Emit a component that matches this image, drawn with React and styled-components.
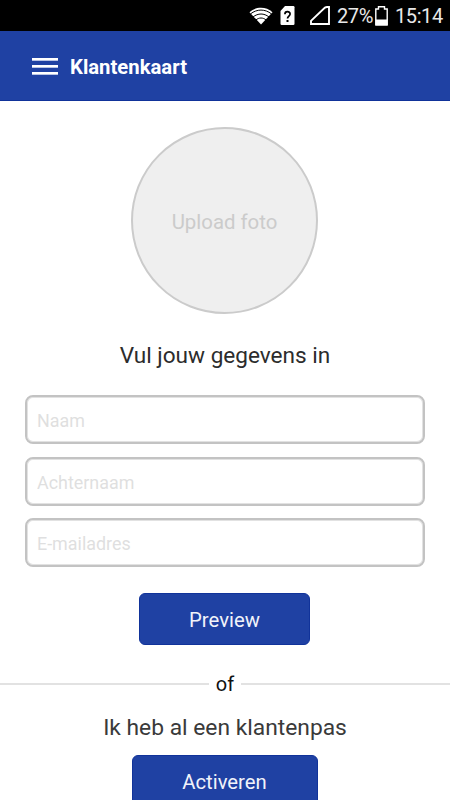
import React, { useState } from "react";
import styled, { createGlobalStyle } from "styled-components";

const FIELDS = [
  { id: "firstName", label: "Naam" },
  { id: "lastName", label: "Achternaam" },
  { id: "email", label: "E-mailadres" },
];

function StatusBar() {
  return (
    <Status>
      <StatusIcon width="24" height="18" viewBox="0 0 24 18" $gap={7}>
        <path d="M0.5 5.2C7 -0.7 17 -0.7 23.5 5.2L12 17.5Z" fill="#fff" />
        <g fill="none" stroke="#000" strokeWidth="1">
          <path d="M1.5 6.9C8 1.8 16 1.8 22.5 6.9" />
          <path d="M4 10C9 6 15 6 20 10" />
          <path d="M6.8 13.1C10 10.3 14 10.3 17.2 13.1" />
        </g>
      </StatusIcon>
      <StatusIcon width="15" height="19" viewBox="0 0 15 19" $gap={15}>
        <path d="M5 0H13.3Q14.5 0 14.5 1.2V17.8Q14.5 19 13.3 19H1.7Q0.5 19 0.5 17.8V5Z" fill="#fff" />
        <path d="M4.9 8.2C4.9 4.9 10.1 4.9 10.1 8C10.1 10 7.5 10.2 7.5 12.6" fill="none" stroke="#000" strokeWidth="1.7" />
        <rect x="6.5" y="14" width="2" height="2" fill="#000" />
      </StatusIcon>
      <StatusIcon width="20" height="19" viewBox="0 0 20 19" $gap={7}>
        <path d="M1 18V14.8L15 1.6Q16 1 17 1H19V18Z" fill="none" stroke="#fff" strokeWidth="1.9" />
      </StatusIcon>
      <StatusText $width={36}>27%</StatusText>
      <StatusIcon width="13" height="20" viewBox="0 0 13 20" $gap={7}>
        <path d="M0.8 18.8V3H3.5V0.8H9.5V3H12.2V18.8Z" fill="none" stroke="#fff" strokeWidth="1.4" />
        <rect x="0.5" y="13.5" width="12" height="6" fill="#fff" />
      </StatusIcon>
      <StatusText $width={48}>15:14</StatusText>
    </Status>
  );
}

function App() {
  const [values, setValues] = useState({ firstName: "", lastName: "", email: "" });

  function onChange(e) {
    setValues({ ...values, [e.target.name]: e.target.value });
  }

  return (
    <Screen>
      <GlobalStyle />
      <StatusBar />
      <Header>
        <MenuButton aria-label="Menu">
          <MenuLine />
          <MenuLine />
          <MenuLine />
        </MenuButton>
        <Title>Klantenkaart</Title>
      </Header>
      <Content>
        <UploadButton>Upload foto</UploadButton>
        <Heading>Vul jouw gegevens in</Heading>
        <Form>
          {FIELDS.map(field => (
            <Input
              key={field.id}
              name={field.id}
              placeholder={field.label}
              value={values[field.id]}
              onChange={onChange}
            />
          ))}
        </Form>
        <Button $width={171}>Preview</Button>
        <Divider>of</Divider>
        <SubHeading>Ik heb al een klantenpas</SubHeading>
        <Button $width={186}>Activeren</Button>
      </Content>
    </Screen>
  );
}

const GlobalStyle = createGlobalStyle`
  * {
    box-sizing: border-box;
  }

  body {
    margin: 0;
    background-color: #fff;
    font-family: Roboto, sans-serif;
  }

  button,
  input {
    font-family: inherit;
  }
`;

const Screen = styled.div`
  display: flex;
  flex-direction: column;
  height: 800px;
  overflow: hidden;
`;

const Status = styled.div`
  display: flex;
  flex: none;
  align-items: center;
  justify-content: flex-end;
  height: 31px;
  padding-right: 7px;
  background-color: #000;
`;

const StatusIcon = styled.svg`
  flex: none;
  margin-right: ${props => props.$gap}px;
`;

const StatusText = styled.span`
  width: ${props => props.$width}px;
  margin-right: ${props => (props.$width === 36 ? 2 : 0)}px;
  padding-top: 1px;
  font-size: 20px;
  line-height: 24px;
  letter-spacing: -0.4px;
  white-space: nowrap;
  color: #e8e8e8;
`;

const Header = styled.header`
  display: flex;
  flex: none;
  align-items: center;
  height: 70px;
  padding: 2px 32px 0;
  border-bottom: 1px solid #11339a;
  background-color: #1f41a3;
`;

const MenuButton = styled.button`
  display: flex;
  flex-direction: column;
  gap: 4px;
  width: 26px;
  margin-right: 12px;
  padding: 0;
  border: 0;
  background: none;
`;

const MenuLine = styled.span`
  height: 3px;
  border-bottom: 1px solid #b9c4e4;
  background-color: #fff;
`;

const Title = styled.h1`
  margin: 0;
  font-weight: 700;
  font-size: 20.3px;
  line-height: 24px;
  color: #fff;
`;

const Content = styled.main`
  display: flex;
  flex: 1;
  flex-direction: column;
  align-items: center;
  padding-top: 26px;
`;

const UploadButton = styled.button`
  flex: none;
  width: 187px;
  height: 187px;
  margin-right: 1px;
  padding: 2px 0 0;
  border: 2px solid #cbcbcb;
  border-radius: 50%;
  background-color: #efefef;
  font-size: 20.4px;
  color: #cbcbcb;
`;

const Heading = styled.h2`
  margin: 28px 0 0;
  font-weight: 400;
  font-size: 22.6px;
  line-height: 28px;
  color: #2c2c2c;
`;

const Form = styled.form`
  display: flex;
  flex-direction: column;
  gap: 12.7px;
  width: 400px;
  margin-top: 25px;
`;

const Input = styled.input`
  width: 100%;
  height: 49px;
  padding: 2px 10px 0;
  border: 2px solid #c3c3c3;
  border-radius: 8px;
  background-color: #fff;
  box-shadow: inset 0 0 0 1px #e2e2e2;
  font-size: 17.9px;
  color: #2c2c2c;

  &::placeholder {
    color: #dfdfe0;
    opacity: 1;
  }
`;

const Button = styled.button`
  flex: none;
  width: ${props => props.$width}px;
  height: 52px;
  margin-top: 26px;
  margin-right: 1px;
  padding: 2px 0 0;
  border: 1px solid #11339a;
  border-radius: 6px;
  background-color: #1f41a3;
  font-size: 20.3px;
  color: #f1f3fa;

  h2 + & {
    margin-top: 13px;
  }
`;

const Divider = styled.div`
  display: flex;
  align-items: center;
  gap: 7px;
  width: 100%;
  margin-top: 27px;
  font-size: 20px;
  line-height: 24px;
  color: #111;

  &::before,
  &::after {
    content: "";
    flex: 1;
    height: 2px;
    background-color: #e2e2e2;
  }
`;

const SubHeading = styled(Heading)`
  margin-top: 18px;
  font-size: 22.8px;
  color: #3a3a3a;
`;

export default App;
